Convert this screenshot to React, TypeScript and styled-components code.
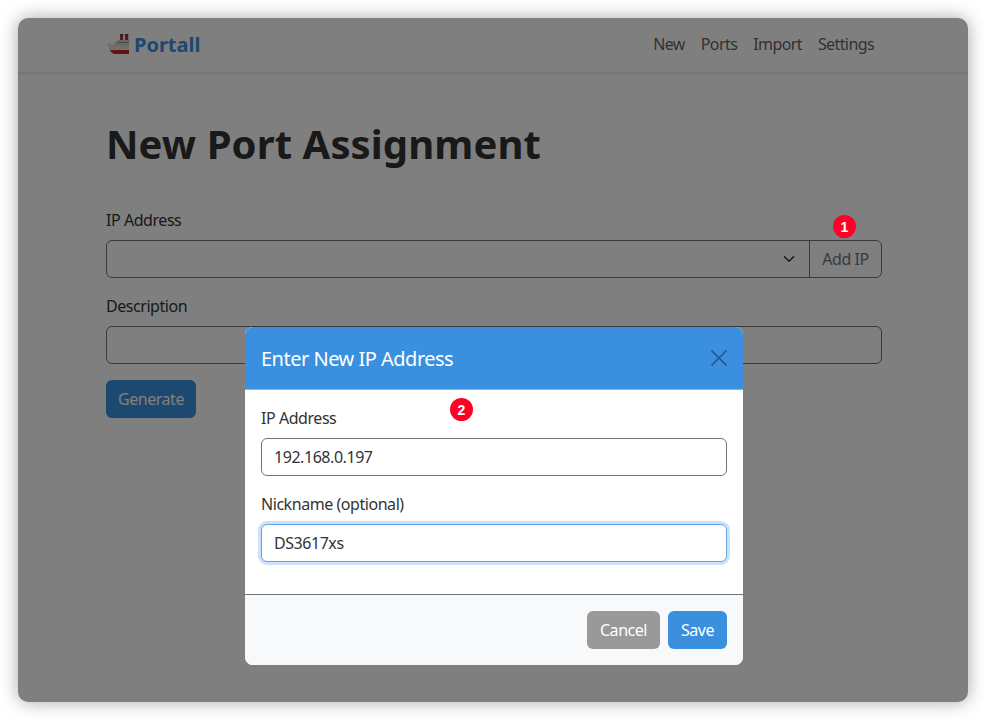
import React from 'react'
import styled, { createGlobalStyle } from 'styled-components'

const GlobalStyle = createGlobalStyle`
	html, body {
		margin: 0;
		padding: 0;
		background: #ffffff;
	}
	* {
		box-sizing: border-box;
	}
`

const Ship: React.FC = () => (
	<svg width="22" height="20" viewBox="0 0 22 20" aria-hidden="true">
		<rect x="13" y="0" width="3.2" height="6" fill="#cc2a30" />
		<rect x="18" y="0" width="3.2" height="6" fill="#cc2a30" />
		<rect x="13" y="0" width="3.2" height="1.2" fill="#444" />
		<rect x="18" y="0" width="3.2" height="1.2" fill="#444" />
		<path d="M8 8 L11 6 L22 6 L22 12 L8 12 Z" fill="#cfcfca" />
		<rect x="11" y="8" width="11" height="1" fill="#8f8f8c" />
		<path d="M0 9 L7 10 L9 11.5 L22 11.5 L22 15.5 L2.5 15.5 Z" fill="#e2dccf" />
		<path d="M2.5 15 L22 15 L22 20 L7 20 Q4 19 2.5 15 Z" fill="#c8252b" />
		<path d="M2.5 15 L22 15 L22 16 L3 16 Z" fill="#f4efe4" />
	</svg>
)

const App: React.FC = () => {
	return (
		<Screen>
			<GlobalStyle />
			<Window>
				<Navbar>
					<Brand>
						<Ship />
						<BrandName>Portall</BrandName>
					</Brand>
					<NavLinks>
						<NavLink>New</NavLink>
						<NavLink>Ports</NavLink>
						<NavLink>Import</NavLink>
						<NavLink>Settings</NavLink>
					</NavLinks>
				</Navbar>
				<Main>
					<Heading>New Port Assignment</Heading>
					<Field>
						<Label>IP Address</Label>
						<InputGroup>
							<SelectBox>
								<svg width="12" height="12" viewBox="0 0 16 16" fill="none">
									<path d="M2 5l6 6 6-6" stroke="#343a40" strokeWidth="2.2" strokeLinecap="round" strokeLinejoin="round" />
								</svg>
							</SelectBox>
							<AddButton>Add IP</AddButton>
						</InputGroup>
					</Field>
					<Field>
						<Label>Description</Label>
						<TextBox />
					</Field>
					<GenerateButton>Generate</GenerateButton>
				</Main>
				<Backdrop>
					<Modal>
						<ModalHeader>
							<ModalTitle>Enter New IP Address</ModalTitle>
							<svg width="16" height="16" viewBox="0 0 16 16" fill="none">
								<path d="M0.5 0.5l15 15M15.5 0.5l-15 15" stroke="#245b8f" strokeWidth="1.7" />
							</svg>
						</ModalHeader>
						<ModalBody>
							<Field>
								<Label>IP Address</Label>
								<TextBox>192.168.0.197</TextBox>
							</Field>
							<Field>
								<Label>Nickname (optional)</Label>
								<TextBox $focus>DS3617xs</TextBox>
							</Field>
						</ModalBody>
						<ModalFooter>
							<CancelButton>Cancel</CancelButton>
							<SaveButton>Save</SaveButton>
						</ModalFooter>
					</Modal>
				</Backdrop>
				<Badge $top={197} $left={815}>1</Badge>
				<Badge $top={380} $left={432}>2</Badge>
			</Window>
		</Screen>
	)
}

export default App

const Screen = styled.div`
	width: 986px;
	height: 720px;
	padding: 18px;
	background: #ffffff;
	font-family: 'Noto Sans', 'DejaVu Sans', sans-serif;
	font-size: 16px;
	letter-spacing: -0.45px;
	color: #333333;
`
const Window = styled.div`
	position: relative;
	width: 950px;
	height: 684px;
	border-radius: 10px;
	overflow: hidden;
	background: #ffffff;
	box-shadow: 0 0 18px rgba(0, 0, 0, 0.35);
`
const Navbar = styled.div`
	height: 54px;
	padding: 0 94px 2px 88px;
	display: flex;
	align-items: center;
	justify-content: space-between;
	box-shadow: 0 1px 4px rgba(0, 0, 0, 0.15);
`
const Brand = styled.div`
	display: flex;
	align-items: center;
	gap: 5px;
	padding-left: 1px;
`
const BrandName = styled.span`
	font-size: 20px;
	font-weight: 700;
	letter-spacing: 0;
	color: #3a90de;
`
const NavLinks = styled.div`
	display: flex;
	gap: 16px;
	letter-spacing: -0.6px;
`
const NavLink = styled.span`
	color: rgba(0, 0, 0, 0.65);
`
const Main = styled.div`
	padding: 48px 86px 0 88px;
`
const Heading = styled.h1`
	margin: 0 0 40px;
	font-size: 40px;
	line-height: 48px;
	font-weight: 700;
	letter-spacing: 0.1px;
`
const Field = styled.div`
	margin-bottom: 16px;
`
const Label = styled.div`
	margin-bottom: 8px;
	line-height: 24px;
`
const InputGroup = styled.div`
	display: flex;
	height: 38px;
`
const SelectBox = styled.div`
	flex: 1;
	display: flex;
	align-items: center;
	justify-content: flex-end;
	padding-right: 14px;
	border: 1px solid #6c757d;
	border-radius: 6px 0 0 6px;
`
const AddButton = styled.div`
	width: 73px;
	margin-left: -1px;
	display: flex;
	align-items: center;
	justify-content: center;
	border: 1px solid #6c757d;
	border-radius: 0 6px 6px 0;
	color: #6c757d;
`
const Badge = styled.span<{ $top: number; $left: number }>`
	position: absolute;
	top: ${({ $top }) => $top}px;
	left: ${({ $left }) => $left}px;
	width: 23px;
	height: 23px;
	border-radius: 50%;
	display: flex;
	align-items: center;
	justify-content: center;
	background: #ff0027;
	color: #ffffff;
	font-family: 'Liberation Sans', sans-serif;
	font-size: 14px;
	font-weight: 700;
	letter-spacing: 0;
`
const TextBox = styled.div<{ $focus?: boolean }>`
	height: 38px;
	padding: 0 12px;
	display: flex;
	align-items: center;
	border: 1px solid ${({ $focus }) => ($focus ? '#5ea4e6' : '#6c757d')};
	border-radius: 6px;
	box-shadow: ${({ $focus }) => ($focus ? '0 0 0 3px rgba(58, 144, 222, 0.25)' : 'none')};
	background: #ffffff;
	color: #333333;
`
const Button = styled.div<{ $width: number }>`
	width: ${({ $width }) => $width}px;
	height: 38px;
	display: inline-flex;
	align-items: center;
	justify-content: center;
	border-radius: 6px;
	color: #ffffff;
`
const GenerateButton = styled(Button).attrs({ $width: 90 })`
	background: #3a90de;
`
const SaveButton = styled(Button).attrs({ $width: 59 })`
	background: #3a90de;
`
const CancelButton = styled(Button).attrs({ $width: 73 })`
	background: #999999;
`
const Backdrop = styled.div`
	position: absolute;
	inset: 0;
	display: flex;
	justify-content: center;
	align-items: flex-start;
	padding-top: 309px;
	background: rgba(0, 0, 0, 0.5);
`
const Modal = styled.div`
	width: 498px;
	height: 338px;
	margin-left: 2px;
	display: flex;
	flex-direction: column;
	border-radius: 8px;
	overflow: hidden;
	background: #ffffff;
`
const ModalHeader = styled.div`
	height: 63px;
	padding: 0 16px;
	display: flex;
	flex: none;
	align-items: center;
	justify-content: space-between;
	background: #3a90de;
	border-bottom: 1px solid #a8adb3;
`
const ModalTitle = styled.div`
	font-size: 20px;
	letter-spacing: -0.5px;
	color: #ffffff;
`
const ModalBody = styled.div`
	flex: 1;
	padding: 16px;
`
const ModalFooter = styled.div`
	height: 71px;
	padding: 0 16px;
	display: flex;
	align-items: center;
	justify-content: flex-end;
	gap: 8px;
	border-top: 1px solid #6c757d;
	background: #f8f9fa;
`
